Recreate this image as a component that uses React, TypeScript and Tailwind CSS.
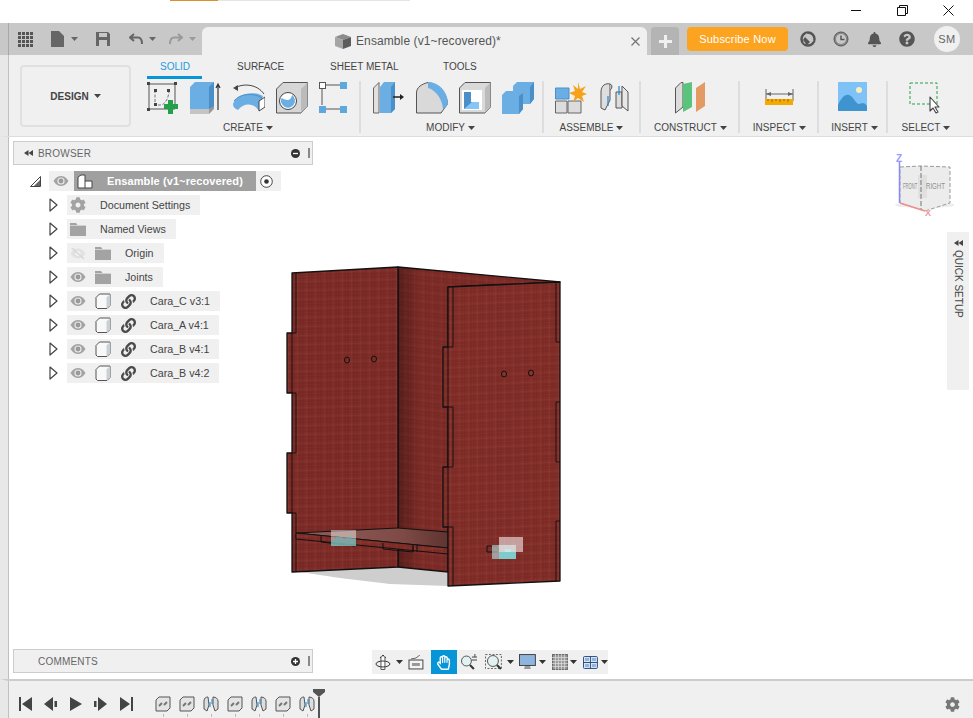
import { FaBell, FaCog, FaLink, FaQuestionCircle, FaRegHandPaper } from "react-icons/fa";

const Caret = ({ color = "#444" }: { color?: string }) => (
  <svg width="7" height="4" viewBox="0 0 7 4" className="shrink-0">
    <path d="M0 0H7L3.5 4Z" fill={color} />
  </svg>
);

const Eye = () => (
  <svg width="16" height="10" viewBox="0 0 16 10">
    <path d="M0.5 5C3 1 5.5 0 8 0s5 1 7.5 5C13 9 10.500 10 8 10S3 9 0.500 5Z" fill="#a3a3a3" />
    <circle cx="8" cy="5" r="3.600" fill="#e8e8e8" />
    <circle cx="8" cy="5" r="2.400" fill="#9a9a9a" />
  </svg>
);

const EyeOff = () => (
  <svg width="16" height="13" viewBox="0 0 16 13">
    <path d="M0.500 6.500C3 2.500 5.500 1.500 8 1.500s5 1 7.500 5C13 10.500 10.500 11.500 8 11.500S3 10.500 0.500 6.500Z" fill="#e2e2e2" />
    <circle cx="8" cy="6.500" r="2.500" fill="#f4f4f4" />
    <path d="M2 1L14 12" stroke="#d8d8d8" strokeWidth="1.500" />
  </svg>
);

const Folder = () => (
  <svg width="16" height="13" viewBox="0 0 16 13">
    <path d="M0 0H6L7.500 2H16V13H0Z" fill="#a3a3a3" />
    <path d="M0 2.500H16" stroke="#e6e6e6" strokeWidth="0.700" />
  </svg>
);

const Body = () => (
  <svg width="16" height="16" viewBox="0 0 16 16">
    <path d="M1 4.500L4.500 1H15V12.500L12 15.500H2.500L1 14Z" fill="#f8f8f8" stroke="#555" strokeWidth="1" strokeLinejoin="round" />
    <path d="M11.500 4.500L15 1V12.500L11.500 15.500Z" fill="#c9d0d6" />
  </svg>
);

const Expander = () => (
  <svg width="9" height="14" viewBox="0 0 9 14" className="shrink-0">
    <path d="M1 1L8 7L1 13Z" fill="#fff" stroke="#444" strokeWidth="1.200" strokeLinejoin="round" />
  </svg>
);

const TreeRow = ({ label, icons }: { label: string; icons: React.ReactNode[] }) => (
  <div className="flex items-center ml-[36px] mb-[4px]">
    <Expander />
    <div className="ml-[9px] flex h-[20px] items-center bg-[#f0f0f0] pl-[3px] pr-[10px]">
      <div className="flex gap-[9px]">
        {icons.map((icon, i) => (
          <span key={i} className="flex h-4 w-4 items-center justify-center">{icon}</span>
        ))}
      </div>
      <span className="ml-[14px] text-[10.7px] text-[#444] whitespace-nowrap">{label}</span>
    </div>
  </div>
);

const Sketch = () => (
  <svg width="32" height="32" viewBox="0 0 32 32">
    <path d="M2 2H28V27H2Z" fill="none" stroke="#555" />
    <path d="M8 8V23H13C18 23 22 16 22 8" fill="none" stroke="#777" strokeDasharray="3 1.500" />
    <g fill="#444">
      <rect x="0" y="0" width="3" height="3" />
      <rect x="27" y="0" width="3" height="3" />
      <rect x="0" y="26" width="3" height="3" />
      <rect x="7" y="7" width="3" height="3" />
      <rect x="20" y="7" width="3" height="3" />
      <rect x="7" y="21" width="3" height="3" />
    </g>
    <path d="M21 18H26V22H31V27H26V32H21V27H17V22H21Z" fill="#22a14a" />
  </svg>
);

const Extrude = () => (
  <svg width="32" height="32" viewBox="0 0 32 32">
    <path d="M0 5L5 0H24V25L19 31H0Z" fill="#6aaee4" />
    <path d="M19 5L24 0V25L19 29Z" fill="#4a8fc7" />
    <path d="M0 27H19V32H0Z" fill="#c4c4c4" />
    <path d="M19 27L24 24V27L19 32Z" fill="#999" />
    <path d="M28 28V3M26 6L28 2L30 6" fill="none" stroke="#333" strokeWidth="1.200" />
  </svg>
);

const Revolve = () => (
  <svg width="32" height="32" viewBox="0 0 32 32">
    <path d="M2 6C10 1 24 2 31 12" fill="none" stroke="#444" />
    <path d="M0 6L5 3L5 9Z" fill="#444" />
    <path d="M0 22C3 12 20 8 30 14L26 29C21 20 10 21 5 28C2 27 0 25 0 22Z" fill="#6aaee4" />
    <path d="M1 19C6 12 20 10 29 16" fill="none" stroke="#4a8fc7" />
    <path d="M26 19L32 15V25L26 29Z" fill="#fff" stroke="#444" />
  </svg>
);

const Hole = () => (
  <svg width="32" height="32" viewBox="0 0 32 32">
    <path d="M0.500 7L7 0.500H31.500V24L25 31H0.500Z" fill="#d6d6d6" stroke="#555" />
    <path d="M25 7L31.500 0.500V24L25 31Z" fill="#bbb" />
    <circle cx="12" cy="19" r="8.500" fill="#fff" stroke="#444" />
    <path d="M5.500 16A7 7 0 1 0 16 13C15 19 11 19 5.500 16Z" fill="#6aaee4" />
  </svg>
);

const Pattern = () => (
  <svg width="32" height="32" viewBox="0 0 32 32">
    <path d="M7 3H21M3 7V23M7 27H21" stroke="#555" strokeWidth="1" />
    <rect x="0.500" y="0.500" width="6" height="6" fill="#fff" stroke="#555" />
    <rect x="21" y="0" width="7" height="7" fill="#5fa8de" />
    <rect x="0" y="24" width="7" height="7" fill="#5fa8de" />
    <rect x="21" y="24" width="7" height="7" fill="#5fa8de" />
  </svg>
);

const PressPull = () => (
  <svg width="32" height="32" viewBox="0 0 32 32">
    <path d="M0.500 6L6 0.500V31H0.500Z" fill="#e0e0e0" stroke="#666" />
    <path d="M7 5L11 0H22V27L18 31H7Z" fill="#6aaee4" />
    <path d="M18 5L22 0V27L18 31Z" fill="#4a8fc7" />
    <path d="M20 15H28" stroke="#222" strokeWidth="1.500" />
    <path d="M27 12L31 15L27 18Z" fill="#222" />
  </svg>
);

const Fillet = () => (
  <svg width="32" height="32" viewBox="0 0 32 32">
    <path d="M0.500 11C0.500 5 6 2 12 0.500C22 2 31.500 12 31.500 22L25 31H0.500Z" fill="#d9d9d9" stroke="#555" />
    <path d="M12 0C23 0 32 10 32 22L27 28C27 18 20 8 12 6Z" fill="#6aaee4" />
  </svg>
);

const Shell = () => (
  <svg width="32" height="32" viewBox="0 0 32 32">
    <path d="M0.500 6L6 0.500H31.500V25L26 31H0.500Z" fill="#d9d9d9" stroke="#555" />
    <rect x="3" y="8" width="20" height="20" fill="#fff" />
    <path d="M5 10H12V20H20V27H5Z" fill="#4a8fc7" />
    <path d="M13 20H20V27H5Z" fill="#86c5f5" />
    <path d="M26 6L31.500 0.500V25L26 31Z" fill="#bbb" />
  </svg>
);

const Combine = () => (
  <svg width="32" height="32" viewBox="0 0 32 32">
    <path d="M0 13L4 9H11V4L15 0H32V17L28 22H21V27L17 32H0Z" fill="#6aaee4" />
    <path d="M28 5L32 0V17L28 22ZM17 14L21 11V27L17 32Z" fill="#4a8fc7" />
  </svg>
);

const Assemble = () => (
  <svg width="32" height="32" viewBox="0 0 32 32">
    <path d="M0.500 6H14V17H0.500Z" fill="#6aaee4" stroke="#4a8fc7" />
    <path d="M0.500 19H12V31H0.500ZM13 19H26V31H13Z" fill="#dcdcdc" stroke="#666" />
    <path d="M23 0L25 7L31 4L27 10L32 12L27 14L29 20L23 16L18 20L20 14L14 11L20 9L18 3L23 7Z" fill="#f6a11a" />
  </svg>
);

const Joint = () => (
  <svg width="32" height="32" viewBox="0 0 32 32">
    <path d="M1 10C1 3 6 1 10 2V18L5 28L1 26Z" fill="#dedede" stroke="#555" />
    <path d="M10 2C13 3 12 7 10 8" fill="#bbb" stroke="#555" />
    <path d="M16 10H22V26H16Z" fill="#ddd" stroke="#555" />
    <path d="M22 4L28 10V29L22 24Z" fill="#e8e8e8" stroke="#555" />
    <path d="M8 14V24M19 4V13" stroke="#1e88d0" strokeWidth="1.200" />
  </svg>
);

const Construct = () => (
  <svg width="32" height="32" viewBox="0 0 32 32">
    <path d="M0.500 6L6 0.500H8V25L0.500 31Z" fill="#dcdcdc" stroke="#555" />
    <path d="M8 2L17 0V25L8 30Z" fill="#5ac47d" />
    <path d="M21 6L30 0V24L21 30Z" fill="#e39a63" />
  </svg>
);

const Inspect = () => (
  <svg width="32" height="32" viewBox="0 0 32 32">
    <path d="M1 7V19M28 7V19M1 12H28" stroke="#666" />
    <path d="M1 12L6 10V14ZM28 12L23 10V14Z" fill="#666" />
    <rect x="0" y="17" width="28" height="6" fill="#f6a900" />
    <path d="M3 17V19M7 17V20M11 17V19M15 17V20M19 17V19M23 17V20" stroke="#9b6a00" />
  </svg>
);

const Insert = () => (
  <svg width="32" height="32" viewBox="0 0 32 32">
    <rect x="0" y="0" width="29" height="29" fill="#7ec2f7" />
    <circle cx="21" cy="8" r="3" fill="#f8efbb" />
    <path d="M0 23C4 14 8 12 11 13C15 14 18 22 21 22C23 22 25 19 29 24V29H0Z" fill="#3f94cf" />
  </svg>
);

const Select = () => (
  <svg width="32" height="32" viewBox="0 0 32 32">
    <rect x="1" y="1" width="27" height="21" fill="none" stroke="#22a14a" strokeDasharray="3 2" />
    <path d="M21 15V29L24 26L27 31L29 30L26 25H30Z" fill="#fff" stroke="#444" strokeWidth="1.100" strokeLinejoin="round" />
  </svg>
);

const tools: { label: string; width: string; pad: string; gap: string; labelPad: string; icons: React.ReactNode[]; line: boolean }[] = [
  { label: "CREATE", width: "w-[220px]", pad: "pl-[6px]", gap: "gap-[11px]", labelPad: "pr-[4px]", icons: [<Sketch />, <Extrude />, <Revolve />, <Hole />, <Pattern />], line: true },
  { label: "MODIFY", width: "w-[183px]", pad: "pl-[12px]", gap: "gap-[11px]", labelPad: "pr-[2px]", icons: [<PressPull />, <Fillet />, <Shell />, <Combine />], line: true },
  { label: "ASSEMBLE", width: "w-[97px]", pad: "pl-[11px]", gap: "gap-[13px]", labelPad: "", icons: [<Assemble />, <Joint />], line: true },
  { label: "CONSTRUCT", width: "w-[99px]", pad: "pl-[34px]", gap: "gap-0", labelPad: "pl-[2px]", icons: [<Construct />], line: true },
  { label: "INSPECT", width: "w-[79px]", pad: "pl-[25px]", gap: "gap-0", labelPad: "pl-[2px]", icons: [<Inspect />], line: true },
  { label: "INSERT", width: "w-[69px]", pad: "pl-[19px]", gap: "gap-0", labelPad: "pl-[4px]", icons: [<Insert />], line: true },
  { label: "SELECT", width: "w-[74px]", pad: "pl-[21px]", gap: "gap-0", labelPad: "pl-[2px]", icons: [<Select />], line: false },
];

const treeRows: { label: string; icons: React.ReactNode[] }[] = [
  { label: "Document Settings", icons: [<FaCog size={16} color="#a3a3a3" />] },
  { label: "Named Views", icons: [<Folder />] },
  { label: "Origin", icons: [<EyeOff />, <Folder />] },
  { label: "Joints", icons: [<Eye />, <Folder />] },
  ...["Cara_C v3:1", "Cara_A v4:1", "Cara_B v4:1", "Cara_B v4:2"].map((label) => ({
    label,
    icons: [<Eye />, <Body />, <FaLink size={15} color="#4a4a4a" />],
  })),
];

const meshLines = "M3 0V9M6 0V9M0 3H9M0 6H9";
const meshLight = "M0 0V9M0 0H9";

const Model = () => (
  <svg width="973" height="542" viewBox="0 137 973 542" className="absolute inset-0">
    <defs>
      <pattern id="meshLeft" width="9" height="9" patternUnits="userSpaceOnUse" patternTransform="skewY(-1.300)">
        <rect width="9" height="9" fill="#802e29" />
        <path d={meshLines} stroke="#6e2320" strokeWidth="0.600" />
        <path d={meshLight} stroke="#a04c45" strokeWidth="0.300" />
      </pattern>
      <pattern id="meshRight" width="9" height="9" patternUnits="userSpaceOnUse" patternTransform="skewY(5.400)">
        <rect width="9" height="9" fill="#802e29" />
        <path d={meshLines} stroke="#6e2320" strokeWidth="0.600" />
        <path d={meshLight} stroke="#9a4640" strokeWidth="0.250" />
      </pattern>
      <pattern id="meshFront" width="9" height="9" patternUnits="userSpaceOnUse" patternTransform="skewY(-2.500)">
        <rect width="9" height="9" fill="#842f2a" />
        <path d={meshLines} stroke="#702420" strokeWidth="0.600" />
        <path d={meshLight} stroke="#a6524b" strokeWidth="0.300" />
      </pattern>
      <linearGradient id="cornerShade" x1="0" x2="1" y1="0" y2="0">
        <stop offset="0" stopColor="#000" stopOpacity="0.300" />
        <stop offset="1" stopColor="#000" stopOpacity="0" />
      </linearGradient>
      <linearGradient id="floorShade" x1="0" x2="1" y1="0" y2="0">
        <stop offset="0" stopColor="#8f5f5b" />
        <stop offset="0.700" stopColor="#7f4a46" />
        <stop offset="1" stopColor="#5e3431" />
      </linearGradient>
    </defs>
    <path d="M300 572L398 566L448 573V586L390 584L340 578Z" fill="#cecece" />
    <path d="M398 267L560 282L448 287V572L398 567Z" fill="url(#meshRight)" stroke="#111" strokeWidth="1.300" strokeLinejoin="round" />
    <path d="M398 268H420V567H398Z" fill="url(#cornerShade)" />
    <path
      d="M292 273L398 267V567L292 572V513H287V453H292V393H287V333H292Z"
      fill="url(#meshLeft)"
      stroke="#111"
      strokeWidth="1.300"
      strokeLinejoin="round"
    />
    <path d="M296 273V333H292V393H296V453H292V513H296V572" fill="none" stroke="#111" strokeWidth="0.900" />
    <path d="M296 533L398 528L448 532V548Z" fill="url(#floorShade)" stroke="#111" />
    <path d="M296 533L448 548V554L296 539Z" fill="url(#meshFront)" stroke="#111" />
    <path d="M321 536V542L355 546V540M383 543V549L413 552V546M413 545V552M417 545V552" fill="none" stroke="#111" />
    <path
      d="M448 287L560 282V581L448 586V527H443V467H448V407H443V347H448Z"
      fill="url(#meshFront)"
      stroke="#111"
      strokeWidth="1.300"
      strokeLinejoin="round"
    />
    <path d="M453 287V347H448V407H453V467H448V527H453V586" fill="none" stroke="#111" strokeWidth="0.900" />
    <path d="M556 282V342H560M560 402H556V462H560M560 521H556V581" fill="none" stroke="#111" strokeWidth="0.900" />
    <g fill="none" stroke="#111" strokeWidth="1">
      <ellipse cx="347" cy="360" rx="2.500" ry="3" />
      <ellipse cx="374" cy="359" rx="2.500" ry="3" />
      <ellipse cx="504" cy="374" rx="2.500" ry="3" />
      <ellipse cx="531" cy="373" rx="2.500" ry="3" />
      <path d="M497 546H487V552H497" />
    </g>
    <rect x="331" y="530" width="25" height="16" fill="#fff" fillOpacity="0.450" />
    <path d="M331 539H336V537H342V539H346V537H352V539H356V546H331Z" fill="#5fb3b0" fillOpacity="0.650" />
    <rect x="492" y="545" width="24" height="14" fill="#b9e6e6" fillOpacity="0.600" />
    <path d="M505 549H511V552H516V559H499V552H505Z" fill="#7fcaca" />
    <rect x="499" y="537" width="24" height="15" fill="#fff" fillOpacity="0.550" />
  </svg>
);

// view cube, drawn in a 60x68 box whose corner sits at page (894,151)
const ViewCube = () => (
  <svg width="60" height="68" viewBox="0 0 60 68" className="absolute left-[894px] top-[14px]">
    <ellipse cx="31" cy="54" rx="30" ry="3" fill="#ececec" />
    <path d="M6 16L27 15L56 16V52L31 60L6 52Z" fill="#ececec" />
    <path d="M24 24H33V47H24Z" fill="#e0e0e0" />
    <path d="M6 16L27 15L56 16V52L31 60L6 52Z" fill="none" stroke="#999" strokeDasharray="4 2" />
    <path d="M27 15V58" stroke="#777" strokeDasharray="5 2" />
    <path d="M5.500 11V52" stroke="#8a8aff" strokeWidth="1.500" />
    <path d="M6 52L31 60" stroke="#ee8f8f" strokeWidth="1.500" />
    <text x="2" y="11" fontSize="10" fontWeight="700" fill="#9a9aff">Z</text>
    <text x="31" y="65" fontSize="9" fontWeight="700" fill="#ee9999">X</text>
    <text transform="translate(9 38) scale(0.46 1)" fontSize="9" fill="#8f8f8f">FRONT</text>
    <text transform="translate(32 38) scale(0.68 1)" fontSize="9" fill="#8f8f8f">RIGHT</text>
  </svg>
);

const Collapse = ({ color = "#444" }: { color?: string }) => (
  <svg width="9" height="6" viewBox="0 0 9 6" className="shrink-0">
    <path d="M4.500 0V6L0 3ZM9 0V6L4.500 3Z" fill={color} />
  </svg>
);

const PanelBar = ({ title, sign, arrow }: { title: string; sign: string; arrow: boolean }) => (
  <div className="flex h-[24px] w-[300px] items-center border border-[#cccccc] bg-[#f0f0f0] pr-[2px]">
    <span className="flex w-[24px] justify-end pr-[5px]">{arrow && <Collapse />}</span>
    <span className="text-[10px] tracking-[0.2px] text-[#666]">{title}</span>
    <svg width="9" height="9" viewBox="0 0 9 9" className="ml-auto">
      <circle cx="4.500" cy="4.500" r="4.500" fill="#333" />
      <path d={sign} stroke="#fff" strokeWidth="1.300" />
    </svg>
    <span className="ml-[8px] h-[10px] w-[2px] border-x border-[#888]" />
  </div>
);

const Feature = ({ kind }: { kind: "link" | "joint" }) =>
  kind === "link" ? (
    <svg width="16" height="16" viewBox="0 0 16 16">
      <path d="M1 4L4 1H15V12L12 15H1Z" fill="#e4e4e4" stroke="#555" />
      <path d="M4 10L7 7M9 9L12 6" stroke="#777" strokeWidth="2" fill="none" />
    </svg>
  ) : (
    <svg width="16" height="16" viewBox="0 0 16 16">
      <path d="M1 5C1 2 3 1 5 1L6 9L4 15L1 13ZM10 1C13 1 15 3 15 5V13L12 15L10 9Z" fill="#dedede" stroke="#555" />
      <path d="M7 6V11M9 3V8" stroke="#1e88d0" />
    </svg>
  );

export default function App() {
  return (
    <div className="flex h-[718px] w-[973px] flex-col overflow-hidden bg-white font-['Liberation_Sans',Arial,sans-serif]">
      {/* window title bar */}
      <div className="relative h-[23px] shrink-0 bg-white">
        <div className="ml-[170px] flex h-[1px]">
          <div className="w-[48px] bg-[#d9902f]" />
          <div className="w-[192px] bg-[#e5e5e5]" />
        </div>
        <div className="absolute right-[19px] top-[5px] flex items-center gap-[35px]">
          <svg width="11" height="11" viewBox="0 0 11 11"><path d="M0 5.500H10" stroke="#111" /></svg>
          <svg width="11" height="11" viewBox="0 0 11 11"><path d="M.500 2.500H8.500V10.500H.500ZM2.500 2.500V.500H10.500V8.500H8.500" fill="none" stroke="#111" /></svg>
          <svg width="11" height="11" viewBox="0 0 11 11"><path d="M.500 .500L10.500 10.500M10.500 .500L.500 10.500" stroke="#111" /></svg>
        </div>
      </div>

      {/* app bar with the document tab */}
      <div className="flex h-[32px] shrink-0 items-start border-l-[8px] border-[#c8c8c8] bg-[#c8c8c8] shadow-[inset_1px_0_0_#a8a8a8]">
        <div className="flex h-[32px] w-[194px] items-center">
          <div className="ml-[10px] grid grid-cols-4 gap-[1px]">
            {Array.from({ length: 16 }).map((_, i) => (
              <span key={i} className="h-[3px] w-[3px] bg-[#555]" />
            ))}
          </div>
          <svg width="13" height="16" viewBox="0 0 13 16" className="ml-[18px]"><path d="M0 0H8L13 5V16H0Z" fill="#666" /></svg>
          <span className="ml-[7px]"><Caret color="#666" /></span>
          <svg width="14" height="14" viewBox="0 0 14 14" className="ml-[18px]">
            <path d="M0 0H12L14 2V14H0Z" fill="#666" />
            <rect x="3" y="1" width="8" height="4" fill="#c8c8c8" />
            <rect x="3" y="8" width="8" height="6" fill="#c8c8c8" />
          </svg>
          <svg width="14" height="12" viewBox="0 0 14 12" className="ml-[19px]"><path d="M5 1L1 4.500L5 8M1 4.500H9C12 4.500 13 7 13 11" fill="none" stroke="#666" strokeWidth="2" /></svg>
          <span className="ml-[6px]"><Caret color="#666" /></span>
          <svg width="14" height="12" viewBox="0 0 14 12" className="ml-[13px]"><path d="M9 1L13 4.500L9 8M13 4.500H5C2 4.500 1 7 1 11" fill="none" stroke="#9a9a9a" strokeWidth="2" /></svg>
          <span className="ml-[6px]"><Caret color="#9a9a9a" /></span>
        </div>
        <div className="mt-[4px] flex h-[28px] w-[445px] items-center rounded-t-[6px] bg-[#f0f0f0]">
          <svg width="16" height="15" viewBox="0 0 16 15" className="ml-[133px]">
            <path d="M0 3L8 0L16 3L8 6Z" fill="#8b8b8b" />
            <path d="M0 3L8 6V15L0 12Z" fill="#a5a5a5" />
            <path d="M16 3L8 6V15L16 12Z" fill="#5c5c5c" />
          </svg>
          <span className="ml-[5px] text-[12px] tracking-[0.1px] text-[#555] whitespace-nowrap">Ensamble (v1~recovered)*</span>
          <svg width="9" height="9" viewBox="0 0 9 9" className="ml-auto mr-[7px]"><path d="M.500 .500L8.500 8.500M8.500 .500L.500 8.500" stroke="#777" strokeWidth="1.300" /></svg>
        </div>
        <div className="ml-[4px] mt-[4px] flex h-[28px] w-[28px] items-center justify-center rounded-t-[4px] bg-[#b4b4b4]">
          <svg width="13" height="13" viewBox="0 0 13 13"><path d="M6.500 0V13M0 6.500H13" stroke="#f0f0f0" strokeWidth="3" /></svg>
        </div>
        <div className="ml-[8px] mt-[4px] flex h-[24px] w-[101px] items-center justify-center rounded-[4px] bg-[#fca31f] text-[11px] tracking-[0.2px] text-white">
          Subscribe Now
        </div>
        <div className="ml-[12px] mt-[4px] flex h-[24px] items-center">
          <svg width="16" height="16" viewBox="0 0 16 16">
            <circle cx="8" cy="8" r="6.500" fill="none" stroke="#555" strokeWidth="2.500" />
            <path d="M4 12L11 5M6 3L13 10" stroke="#c8c8c8" strokeWidth="2" />
            <path d="M5 6L10 11L7 14L3 9Z" fill="#555" />
          </svg>
          <svg width="16" height="16" viewBox="0 0 16 16" className="ml-[17px]">
            <circle cx="8" cy="8" r="7" fill="#8a8a8a" stroke="#555" />
            <circle cx="8" cy="8" r="5" fill="#c8c8c8" />
            <path d="M8 4.500V8.500H11.500" stroke="#555" strokeWidth="1.500" fill="none" />
          </svg>
          <FaBell size={15} color="#555" className="ml-[18px]" />
          <FaQuestionCircle size={16} color="#555" className="ml-[17px]" />
          <div className="ml-[19px] flex h-[26px] w-[26px] items-center justify-center rounded-full bg-[#f0f0f0] text-[11px] tracking-[0.5px] text-[#666]">
            SM
          </div>
        </div>
      </div>

      {/* ribbon */}
      <div className="flex h-[82px] shrink-0 border-b border-[#dddddd] border-l-[8px] border-l-[#e8e8e8] bg-[#f0f0f0] shadow-[inset_1px_0_0_#c0c0c0]">
        <div className="ml-[12px] mt-[10px] flex h-[62px] w-[111px] items-center justify-center gap-[5px] rounded-[4px] border-2 border-[#e0e0e0] text-[10px] font-bold text-[#444]">
          DESIGN <Caret />
        </div>
        <div className="ml-[10px] flex flex-col">
          <div className="relative flex h-[26px] items-center pb-[4px] text-[10px] text-[#444]">
            <span className="ml-[19px] w-[77px] text-[#1b9be0]">SOLID</span>
            <span className="w-[93px]">SURFACE</span>
            <span className="w-[113px]">SHEET METAL</span>
            <span>TOOLS</span>
            <span className="absolute bottom-[2px] left-[6px] h-[3px] w-[55px] bg-[#0696d7]" />
          </div>
          <div className="flex h-[52px]">
            {tools.map((tool) => (
              <div key={tool.label} className={`flex flex-col ${tool.width} ${tool.line ? "border-r-2 border-[#dddddd]" : ""}`}>
                <div className={`flex h-[36px] items-start pt-[1px] ${tool.pad} ${tool.gap}`}>
                  {tool.icons.map((icon, i) => (
                    <span key={i} className="block h-8 w-8">{icon}</span>
                  ))}
                </div>
                <div className={`mt-[6px] flex items-center justify-center gap-[3px] text-[10px] text-[#444] ${tool.labelPad}`}>
                  {tool.label} <Caret />
                </div>
              </div>
            ))}
          </div>
        </div>
      </div>

      {/* viewport */}
      <div className="relative flex min-h-0 flex-1 bg-white">
        <Model />
        <ViewCube />
        <div className="relative flex w-[9px] shrink-0 border-r border-[#c0c0c0] bg-[#e8e8e8]" />
        <div className="relative ml-[4px] flex w-[300px] flex-col justify-between pb-[6px] pt-[4px]">
          <div>
            <PanelBar title="BROWSER" sign="M2 4.500H7" arrow />
            <div className="ml-[17px] mt-[6px] mb-[4px] flex items-center">
              <svg width="11" height="11" viewBox="0 0 11 11" className="shrink-0">
                <path d="M10.500 .500V10.500H.500Z" fill="#fff" stroke="#444" />
                <path d="M10 4V10H4Z" fill="#666" />
              </svg>
              <div className="ml-[8px] flex h-[20px] w-[232px] items-center bg-[#f0f0f0]">
                <span className="ml-[4px] flex w-[16px]"><Eye /></span>
                <div className="ml-[5px] flex h-[20px] w-[182px] items-center bg-[#a0a0a0]">
                  <svg width="16" height="15" viewBox="0 0 16 15" className="ml-[3px]">
                    <path d="M1 3L4 1H8V7H15V14H1Z" fill="#fff" stroke="#444" />
                    <path d="M8 7V14" stroke="#444" />
                  </svg>
                  <span className="ml-[14px] text-[11px] font-bold tracking-[0.1px] text-white whitespace-nowrap">Ensamble (v1~recovered)</span>
                </div>
                <svg width="13" height="13" viewBox="0 0 13 13" className="ml-[4px]">
                  <circle cx="6.500" cy="6.500" r="5.800" fill="#fff" stroke="#444" />
                  <circle cx="6.500" cy="6.500" r="2.300" fill="#333" />
                </svg>
              </div>
            </div>
            {treeRows.map((row) => (
              <TreeRow key={row.label} label={row.label} icons={row.icons} />
            ))}
          </div>
          <PanelBar title="COMMENTS" sign="M2 4.500H7M4.500 2V7" arrow={false} />
        </div>

        {/* overlays */}
        <div className="absolute right-[4px] top-[95px] flex h-[158px] w-[22px] flex-col items-center gap-[4px] bg-[#f0f0f0] pt-[8px]">
          <Collapse />
          <span className="text-[10px] leading-[12px] text-[#444] [writing-mode:vertical-rl]">QUICK SETUP</span>
        </div>
        <div className="absolute bottom-[5px] left-[372px] flex h-[24px] w-[236px] items-center bg-[#f0f0f0]">
          <svg width="16" height="17" viewBox="0 0 16 17" className="ml-[3px]">
            <path d="M8 1V16M5 4L8 1L11 4" fill="none" stroke="#333" />
            <path d="M6 2.500V15.500H10V2.500" fill="#fff" stroke="#333" strokeWidth="0.800" />
            <ellipse cx="8" cy="10" rx="7" ry="3" fill="none" stroke="#333" />
          </svg>
          <span className="ml-[5px]"><Caret color="#333" /></span>
          <svg width="16" height="15" viewBox="0 0 16 15" className="ml-[5px]">
            <rect x="1" y="5" width="14" height="9" fill="#f4f4f4" stroke="#444" />
            <rect x="4" y="8" width="8" height="3" fill="#999" />
            <path d="M3 4L8 3L12 0" stroke="#666" fill="none" />
          </svg>
          <div className="ml-[7px] flex h-[24px] w-[26px] items-center justify-center bg-[#0696d7]">
            <FaRegHandPaper size={15} color="#fff" />
          </div>
          <svg width="18" height="16" viewBox="0 0 18 16" className="ml-[3px]">
            <circle cx="6.500" cy="7" r="5" fill="#e2f2f2" stroke="#555" />
            <path d="M10 11L14 15" stroke="#333" strokeWidth="2" />
            <path d="M12 3H18M15 0V3M12 6H18" stroke="#444" />
          </svg>
          <svg width="18" height="16" viewBox="0 0 18 16" className="ml-[8px]">
            <rect x="0.500" y="0.500" width="16" height="14" fill="none" stroke="#666" strokeDasharray="2 1.500" />
            <circle cx="8" cy="7" r="5.500" fill="#e2f2f2" stroke="#555" />
            <path d="M12 11L16 15" stroke="#333" strokeWidth="2" />
          </svg>
          <span className="ml-[4px]"><Caret color="#333" /></span>
          <svg width="18" height="16" viewBox="0 0 18 16" className="ml-[5px]">
            <rect x="0.500" y="0.500" width="16" height="11" fill="#8fb4dd" stroke="#444" />
            <path d="M6 12H11L12 15H5Z" fill="#999" />
          </svg>
          <span className="ml-[2px]"><Caret color="#333" /></span>
          <svg width="16" height="16" viewBox="0 0 16 16" className="ml-[6px]">
            <rect x="0.500" y="0.500" width="15" height="15" fill="#9a9a9a" stroke="#666" />
            <path d="M3.500 0V16M6.500 0V16M9.500 0V16M12.500 0V16M0 3.500H16M0 6.500H16M0 9.500H16M0 12.500H16" stroke="#e0e0e0" strokeWidth="0.700" />
          </svg>
          <span className="ml-[2px]"><Caret color="#333" /></span>
          <svg width="15" height="13" viewBox="0 0 15 13" className="ml-[6px]">
            <rect x="0.500" y="0.500" width="14" height="12" rx="1" fill="#dbe7f5" stroke="#2f4f7f" />
            <path d="M7.500 0V13M0 6.500H15" stroke="#2f4f7f" />
            <path d="M2 2H6V5H2ZM9 2H13V5H9ZM2 8H6V11H2ZM9 8H13V11H9Z" fill="#8fb4dd" />
          </svg>
          <span className="ml-[3px]"><Caret color="#333" /></span>
        </div>
      </div>

      {/* timeline */}
      <div className="relative flex h-[39px] shrink-0 items-center border-t-2 border-l-[8px] border-t-[#cccccc] border-l-[#e8e8e8] bg-[#f0f0f0] pt-[9px] shadow-[inset_1px_0_0_#c0c0c0]">
        <svg width="13" height="14" viewBox="0 0 13 14" className="ml-[11px]"><path d="M0 0H2V14H0ZM13 0V14L3 7Z" fill="#444" /></svg>
        <svg width="13" height="14" viewBox="0 0 13 14" className="ml-[12px]"><path d="M9 0V14L0 7ZM10.500 4H13V10H10.500Z" fill="#444" /></svg>
        <svg width="12" height="14" viewBox="0 0 12 14" className="ml-[13px]"><path d="M0 0V14L12 7Z" fill="#444" /></svg>
        <svg width="13" height="14" viewBox="0 0 13 14" className="ml-[12px]"><path d="M4 0V14L13 7ZM0 4H2.500V10H0Z" fill="#444" /></svg>
        <svg width="13" height="14" viewBox="0 0 13 14" className="ml-[13px]"><path d="M0 0V14L10 7ZM11 0H13V14H11Z" fill="#444" /></svg>
        <div className="ml-[22px] flex gap-[8px]">
          {(["link", "link", "joint", "link", "joint", "link", "joint"] as const).map((kind, i) => (
            <div key={i} className="relative flex w-4 justify-center">
              <Feature kind={kind} />
              <span className="absolute -bottom-[5px] h-[3px] w-[1px] bg-[#bbb]" />
            </div>
          ))}
        </div>
        <div className="absolute bottom-0 left-[305px] flex flex-col items-center">
          <svg width="12" height="8" viewBox="0 0 12 8"><path d="M0 0H12V3L6 8L0 3Z" fill="#555" /></svg>
          <span className="h-[21px] w-[2px] bg-[#555]" />
        </div>
        <FaCog size={15} color="#777" className="ml-auto mr-[13px]" />
      </div>
    </div>
  );
}
